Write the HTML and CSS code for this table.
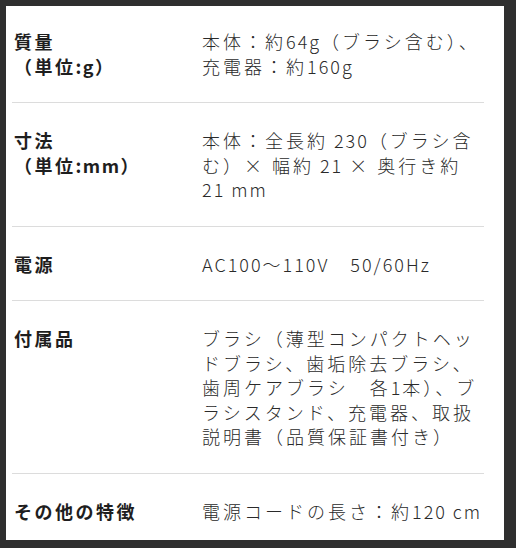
FILE: index.html
```html
<!DOCTYPE html>
<html lang="ja">
<head>
<meta charset="utf-8">
<link rel="stylesheet" href="styles.css">
</head>
<body>
<div class="panel">
  <dl class="specs">
    <div class="row first">
      <dt class="label">質量<br>（単位<span class="lat">:g</span>）</dt>
      <dd class="value">本体：約<span class="lat">64g</span>（ブラシ含む）、充電器：約<span class="lat">160g</span></dd>
    </div>
    <div class="row">
      <dt class="label">寸法<br>（単位<span class="lat">:mm</span>）</dt>
      <dd class="value">本体：全長約<span class="lat"> 230</span>（ブラシ含む）× 幅約<span class="lat"> 21 </span>× 奥行き約<span class="lat"> 21 mm</span></dd>
    </div>
    <div class="row">
      <dt class="label">電源</dt>
      <dd class="value"><span class="lat">AC100〜110V</span>　<span class="lat">50/60Hz</span></dd>
    </div>
    <div class="row">
      <dt class="label">付属品</dt>
      <dd class="value">ブラシ（薄型コンパクトヘッドブラシ、歯垢除去ブラシ、歯周ケアブラシ　各<span class="lat">1</span>本）、ブラシスタンド、充電器、取扱説明書（品質保証書付き）</dd>
    </div>
    <div class="row last">
      <dt class="label">その他の特徴</dt>
      <dd class="value">電源コードの長さ：約<span class="lat">120 cm</span></dd>
    </div>
  </dl>
</div>
</body>
</html>
```
FILE: styles.css
```css
html, body {
  margin: 0;
  padding: 0;
  background: #2f2f2f;
}
body {
  width: 516px;
  height: 548px;
  overflow: hidden;
}
.panel {
  background: #ffffff;
  margin: 6px 12px 8px 6px;
  height: 534px;
  padding: 0 20px 0 6px;
  box-sizing: border-box;
  font-family: "Noto Sans CJK JP", "Noto Sans", sans-serif;
}
.specs {
  margin: 0;
}
.row {
  display: grid;
  grid-template-columns: 190px 1fr;
  padding: 25px 0 24px;
  border-bottom: 1px solid #dcdcdc;
}
.row.first {
  padding-top: 23px;
}
.row.last {
  border-bottom: none;
}
.label {
  margin: 0;
  padding-left: 2px;
  font-size: 18px;
  line-height: 24.5px;
  font-weight: 700;
  color: #1e1e1e;
  letter-spacing: 2.5px;
}
.label .lat {
  letter-spacing: 1.5px;
}
.value {
  margin: 0;
  font-size: 18px;
  line-height: 24.5px;
  font-weight: 300;
  color: #2a2a2a;
  letter-spacing: 3px;
}
.value .lat {
  letter-spacing: 2px;
}
```
